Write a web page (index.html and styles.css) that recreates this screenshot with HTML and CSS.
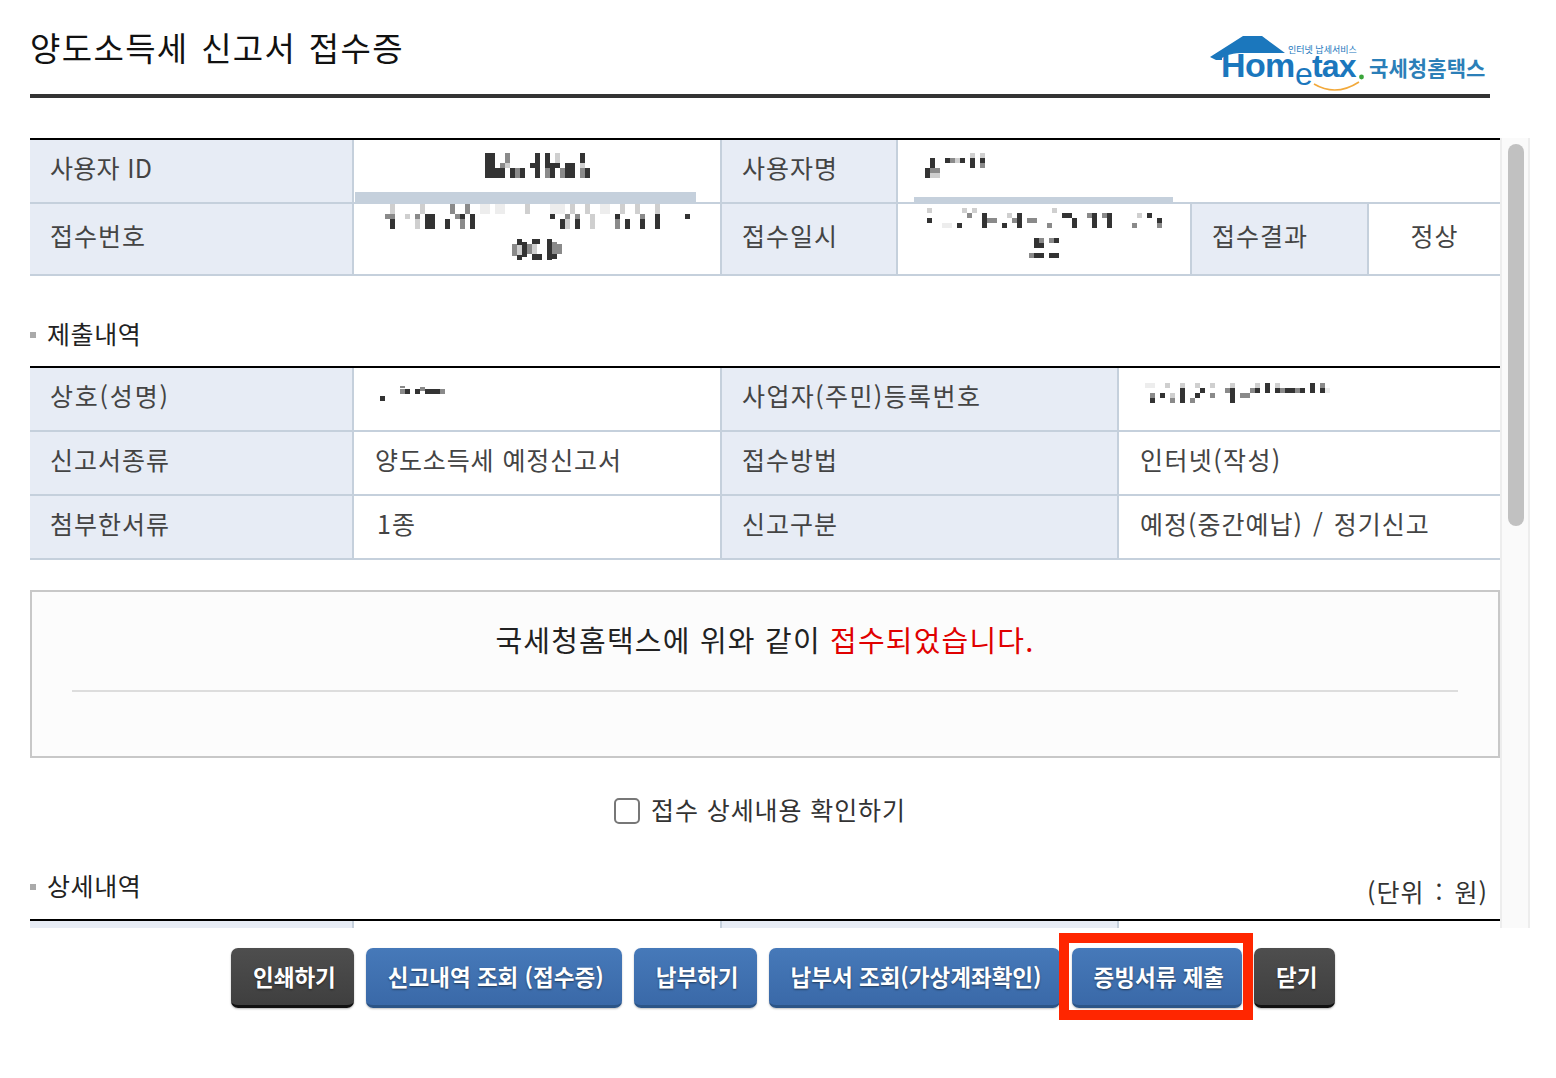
FILE: index.html
```html
<!DOCTYPE html>
<html lang="ko">
<head>
<meta charset="utf-8">
<title>양도소득세 신고서 접수증</title>
<link rel="stylesheet" href="styles.css">
</head>
<body>
<header class="header">
  <h1 class="title">양도소득세 신고서 접수증</h1>
  <svg class="logo" width="282" height="66" viewBox="0 0 282 66" role="img" aria-label="Hometax 국세청홈택스">
    <path class="logo-roof" d="M2 27 L35 6 H54 L77 23 H38 C24 23 18 25 14 28 V30 H8 Z"/>
    <text class="logo-small" x="80" y="23">인터넷 납세서비스</text>
    <text class="logo-hom" x="13" y="47">Hom</text>
    <text class="logo-e" x="87" y="55">e</text>
    <text class="logo-main" x="104" y="47">tax</text>
    <circle class="logo-dot" cx="153.5" cy="47" r="2.4"/>
    <path class="logo-smile" d="M106 54 Q128 67 151 52"/>
    <text class="logo-kr" x="161" y="46">국세청홈택스</text>
  </svg>
</header>

<div class="scroller">
  <main class="content">
    <table class="grid grid-six">
      <colgroup><col class="c-a"><col class="c-b"><col class="c-c"><col class="c-d"><col class="c-e"><col class="c-f"></colgroup>
      <tr class="r-short">
        <th class="id-label">사용자 ID</th>
        <td class="masked center-top">
          <svg class="mosaic" width="105" height="25" viewBox="0 0 21 5">
            <rect class="d" x="0" y="0" width="2" height="5"/><rect class="d" x="2" y="3" width="2" height="2"/><rect class="g" x="4" y="0" width="1" height="2"/><rect class="g" x="3" y="2" width="1" height="1"/><rect class="l" x="4" y="2" width="1" height="1"/><rect class="d" x="5" y="3" width="1" height="2"/><rect class="g" x="6" y="3" width="1" height="2"/><rect class="d" x="7" y="3" width="1" height="2"/><rect class="d" x="9" y="2" width="1" height="1"/><rect class="d" x="10" y="0" width="1" height="5"/><rect class="d" x="12" y="0" width="1" height="3"/><rect class="g" x="12" y="3" width="1" height="2"/><rect class="d" x="13" y="2" width="1" height="3"/><rect class="l" x="14" y="0" width="1" height="2"/><rect class="d" x="14" y="2" width="1" height="1"/><rect class="g" x="15" y="3" width="1" height="2"/><rect class="d" x="16" y="2" width="2" height="3"/><rect class="d" x="19" y="0" width="1" height="2"/><rect class="l" x="19" y="2" width="1" height="1"/><rect class="g" x="19" y="3" width="1" height="2"/><rect class="d" x="20" y="3" width="1" height="2"/>
          </svg>
          <span class="field-bar field-bar-id"></span>
        </td>
        <th>사용자명</th>
        <td class="masked name-cell" colspan="3">
          <svg class="mosaic" width="65" height="25" viewBox="0 0 13 5">
            <rect class="d" x="1" y="1" width="1" height="2"/><rect class="d" x="0" y="3" width="1" height="1"/><rect class="g" x="1" y="3" width="2" height="1"/><rect class="d" x="0" y="4" width="1" height="1"/><rect class="l" x="1" y="4" width="2" height="1"/><rect class="d" x="4" y="1" width="1" height="1"/><rect class="g" x="5" y="1" width="1" height="1"/><rect class="l" x="6" y="1" width="1" height="1"/><rect class="d" x="7" y="1" width="1" height="1"/><rect class="l" x="9" y="0" width="1" height="1"/><rect class="d" x="9" y="1" width="1" height="2"/><rect class="l" x="11" y="0" width="1" height="1"/><rect class="d" x="11" y="1" width="1" height="1"/><rect class="g" x="11" y="2" width="1" height="1"/>
          </svg>
          <span class="field-bar field-bar-name"></span>
        </td>
      </tr>
      <tr class="r-tall">
        <th>접수번호</th>
        <td class="masked stack">
          <svg class="mosaic" width="305" height="25" viewBox="0 0 61 5">
            <rect class="l" x="1" y="0" width="1" height="2"/><rect class="g" x="0" y="2" width="2" height="1"/><rect class="d" x="1" y="3" width="1" height="2"/><rect class="l" x="4" y="2" width="1" height="1"/><rect class="l" x="7" y="0" width="1" height="2"/><rect class="g" x="6" y="2" width="1" height="1"/><rect class="l" x="6" y="3" width="1" height="2"/><rect class="d" x="8" y="2" width="2" height="3"/><rect class="d" x="12" y="3" width="1" height="2"/><rect class="g" x="13" y="0" width="1" height="2"/><rect class="g" x="14" y="2" width="1" height="1"/><rect class="d" x="15" y="2" width="1" height="1"/><rect class="g" x="15" y="3" width="1" height="2"/><rect class="g" x="16" y="0" width="1" height="2"/><rect class="d" x="17" y="2" width="1" height="3"/><rect class="v" x="19" y="0" width="2" height="2"/><rect class="v" x="22" y="0" width="2" height="2"/><rect class="l" x="28" y="0" width="1" height="2"/><rect class="v" x="33" y="0" width="3" height="2"/><rect class="d" x="33" y="2" width="1" height="1"/><rect class="d" x="35" y="3" width="1" height="2"/><rect class="g" x="36" y="2" width="1" height="1"/><rect class="l" x="36" y="3" width="1" height="2"/><rect class="l" x="37" y="0" width="1" height="2"/><rect class="g" x="38" y="2" width="1" height="1"/><rect class="d" x="38" y="3" width="1" height="2"/><rect class="l" x="40" y="0" width="1" height="2"/><rect class="l" x="41" y="2" width="1" height="3"/><rect class="v" x="43" y="0" width="2" height="2"/><rect class="d" x="46" y="2" width="1" height="1"/><rect class="g" x="46" y="3" width="1" height="2"/><rect class="l" x="47" y="0" width="1" height="2"/><rect class="d" x="48" y="3" width="1" height="2"/><rect class="l" x="50" y="0" width="1" height="2"/><rect class="g" x="51" y="2" width="1" height="1"/><rect class="d" x="51" y="3" width="1" height="2"/><rect class="l" x="54" y="0" width="1" height="2"/><rect class="d" x="54" y="2" width="1" height="3"/><rect class="d" x="60" y="2" width="1" height="1"/>
          </svg>
          <svg class="mosaic mosaic-gap" width="50" height="22" viewBox="0 0 10 4.4">
            <rect class="g" x="0" y="1" width="1" height="2.4"/><rect class="d" x="1" y="0" width="1" height="1.2"/><rect class="l" x="1" y="1.2" width="1" height="2"/><rect class="d" x="2" y="0.6" width="1" height="3"/><rect class="d" x="1" y="3.2" width="1" height="1"/><rect class="g" x="3" y="1" width="1" height="2"/><rect class="d" x="4" y="0" width="1.5" height="1"/><rect class="l" x="4" y="1" width="1" height="2"/><rect class="d" x="4" y="3" width="2" height="1.2"/><rect class="d" x="7" y="0" width="1" height="4.2"/><rect class="g" x="8" y="0.6" width="1" height="2.4"/><rect class="d" x="8" y="3" width="1" height="1"/><rect class="g" x="9" y="1" width="1" height="2"/>
          </svg>
        </td>
        <th>접수일시</th>
        <td class="masked stack date-cell">
          <svg class="mosaic" width="235" height="20" viewBox="0 0 47 4">
            <rect class="l" x="0" y="0" width="1" height="1"/><rect class="d" x="0" y="2" width="1" height="1"/><rect class="v" x="3" y="3" width="2" height="1"/><rect class="l" x="7" y="0" width="1" height="1"/><rect class="g" x="8" y="1" width="1" height="1"/><rect class="d" x="6" y="3" width="1" height="1"/><rect class="l" x="9" y="0" width="1" height="1"/><rect class="d" x="11" y="1" width="1" height="3"/><rect class="g" x="12" y="2" width="2" height="1"/><rect class="l" x="16" y="1" width="1" height="1"/><rect class="d" x="15" y="3" width="1" height="1"/><rect class="g" x="17" y="2" width="1" height="1"/><rect class="d" x="18" y="1" width="1" height="3"/><rect class="g" x="20" y="2" width="2" height="1"/><rect class="l" x="25" y="0" width="1" height="1"/><rect class="g" x="24" y="3" width="1" height="1"/><rect class="d" x="27" y="1" width="2" height="1"/><rect class="d" x="29" y="2" width="1" height="2"/><rect class="d" x="33" y="1" width="1" height="3"/><rect class="g" x="32" y="1" width="1" height="1"/><rect class="d" x="36" y="1" width="1" height="3"/><rect class="g" x="35" y="1" width="1" height="1"/><rect class="l" x="42" y="1" width="1" height="1"/><rect class="g" x="41" y="3" width="1" height="1"/><rect class="d" x="44" y="1" width="1" height="1"/><rect class="d" x="46" y="2" width="1" height="1"/><rect class="g" x="46" y="3" width="1" height="1"/>
          </svg>
          <svg class="mosaic mosaic-gap" width="30" height="20" viewBox="0 0 6 4">
            <rect class="d" x="1" y="0" width="1" height="1"/><rect class="g" x="2" y="0" width="1" height="1"/><rect class="d" x="1" y="1" width="2" height="1"/><rect class="g" x="0" y="3" width="1" height="1"/><rect class="d" x="1" y="3" width="2" height="1"/><rect class="g" x="4" y="0" width="1" height="1"/><rect class="d" x="5" y="0" width="1" height="1"/><rect class="d" x="4" y="3" width="2" height="1"/>
          </svg>
        </td>
        <th>접수결과</th>
        <td class="centered">정상</td>
      </tr>
    </table>

    <div class="section-head">
      <h2 class="section-title">제출내역</h2>
    </div>
    <table class="grid grid-four">
      <colgroup><col class="c-a"><col class="c-b"><col class="c-g"><col class="c-h"></colgroup>
      <tr class="r-short">
        <th class="owner-label">상호(성명)</th>
        <td class="masked owner-cell">
          <svg class="mosaic" width="65" height="20" viewBox="0 0 13 4">
            <rect class="g" x="4" y="0" width="1" height="0.4"/><rect class="g" x="8" y="0.2" width="1" height="0.8"/><rect class="d" x="0" y="2" width="1" height="1"/><rect class="g" x="4" y="0.5" width="1" height="1"/><rect class="d" x="5" y="0.5" width="1" height="1"/><rect class="d" x="7" y="0.5" width="1" height="1"/><rect class="d" x="9" y="0.5" width="3" height="1"/><rect class="g" x="12" y="0.5" width="1" height="1"/>
          </svg>
        </td>
        <th class="reg-label">사업자(주민)등록번호</th>
        <td class="masked reg-cell">
          <svg class="mosaic" width="190" height="20" viewBox="0 0 38 4">
            <rect class="v" x="1" y="0" width="2" height="1"/><rect class="l" x="5" y="0" width="1" height="1"/><rect class="l" x="8" y="0" width="1" height="1"/><rect class="g" x="2" y="2" width="1" height="1"/><rect class="d" x="2" y="3" width="1" height="1"/><rect class="d" x="4" y="2" width="1" height="1"/><rect class="l" x="6" y="2" width="1" height="1"/><rect class="g" x="6" y="3" width="1" height="1"/><rect class="d" x="8" y="1" width="1" height="3"/><rect class="g" x="10" y="3" width="1" height="1"/><rect class="l" x="11" y="0" width="1" height="1"/><rect class="d" x="12" y="1" width="1" height="1"/><rect class="d" x="11" y="2" width="1" height="1"/><rect class="g" x="14" y="2" width="1" height="1"/><rect class="l" x="14" y="0" width="1" height="1"/><rect class="g" x="17" y="1" width="1" height="1"/><rect class="l" x="18" y="0" width="1" height="1"/><rect class="d" x="18" y="1" width="1" height="3"/><rect class="g" x="20" y="2" width="2" height="1"/><rect class="g" x="22" y="1" width="1" height="1"/><rect class="l" x="23" y="0" width="1" height="1"/><rect class="d" x="23" y="1" width="1" height="1"/><rect class="d" x="25" y="0" width="1" height="2"/><rect class="l" x="27" y="0" width="1" height="1"/><rect class="d" x="27" y="1" width="1" height="1"/><rect class="g" x="28" y="1" width="1" height="1"/><rect class="d" x="29" y="1" width="2" height="1"/><rect class="g" x="31" y="1" width="1" height="1"/><rect class="d" x="32" y="1" width="1" height="1"/><rect class="d" x="34" y="0" width="1" height="2"/><rect class="g" x="36" y="0" width="1" height="1"/><rect class="d" x="36" y="1" width="1" height="1"/><rect class="v" x="37" y="1" width="1" height="1"/>
          </svg>
        </td>
      </tr>
      <tr class="r-short">
        <th>신고서종류</th>
        <td class="type-value">양도소득세 예정신고서</td>
        <th>접수방법</th>
        <td class="paren-value">인터넷(작성)</td>
      </tr>
      <tr class="r-short">
        <th>첨부한서류</th>
        <td class="count-value">1종</td>
        <th>신고구분</th>
        <td class="split-value">예정(중간예납) / 정기신고</td>
      </tr>
    </table>

    <section class="notice">
      <p class="notice-text">국세청홈택스에 위와 같이 <span class="notice-red">접수되었습니다.</span></p>
      <hr class="notice-rule">
    </section>

    <label class="confirm"><input class="confirm-box" type="checkbox"><span>접수 상세내용 확인하기</span></label>

    <div class="section-head section-head-detail">
      <h2 class="section-title">상세내역</h2>
      <span class="unit">(단위 : 원)</span>
    </div>
    <table class="grid grid-four">
      <colgroup><col class="c-a"><col class="c-b"><col class="c-g"><col class="c-h"></colgroup>
      <tr class="r-short"><th></th><td></td><th></th><td></td></tr>
    </table>
  </main>
  <div class="scrollbar"><div class="thumb"></div></div>
</div>

<footer class="actions">
  <button class="btn btn-dark" type="button">인쇄하기</button>
  <button class="btn btn-blue" type="button">신고내역 조회 (접수증)</button>
  <button class="btn btn-blue" type="button">납부하기</button>
  <button class="btn btn-blue" type="button">납부서 조회(가상계좌확인)</button>
  <button class="btn btn-blue btn-marked" type="button">증빙서류 제출</button>
  <button class="btn btn-dark" type="button">닫기</button>
</footer>
</body>
</html>
```
FILE: styles.css
```css
* { box-sizing: border-box; }
html, body { margin: 0; height: 100%; }
body {
  background: #fff;
  color: #444;
  font-family: "Noto Sans CJK KR", "Noto Sans", sans-serif;
  overflow: hidden;
  padding-left: 30px;
}

.header {
  width: 1460px;
  height: 98px;
  border-bottom: 4px solid #333;
  display: flex;
  justify-content: space-between;
  align-items: flex-start;
  margin-bottom: 40px;
}
.title {
  margin: 23px 0 0;
  font-size: 33px;
  line-height: 48px;
  font-weight: 400;
  color: #111;
  letter-spacing: 1.35px;
  word-spacing: 2px;
}
.logo { margin-top: 30px; }
.logo-roof { fill: #1b77bd; }
.logo-small { font-size: 9px; fill: #1b77bd; }
.logo-main { font: 700 32px "Liberation Sans", sans-serif; fill: #1b77bd; letter-spacing: -0.8px; }
.logo-hom { font: 700 34px "Liberation Sans", sans-serif; fill: #1b77bd; letter-spacing: -0.6px; }
.logo-e { font: 400 32px "Liberation Sans", sans-serif; fill: #1b77bd; }
.logo-dot { fill: #3aa53a; }
.logo-smile { fill: none; stroke: #f2a93b; stroke-width: 1.6; }
.logo-kr { font-size: 21px; font-weight: 700; fill: #2b7fb8; letter-spacing: 0.1px; }

.scroller {
  display: flex;
  width: 1500px;
  height: 790px;
}
.content {
  width: 1470px;
  overflow: hidden;
}
.scrollbar {
  width: 30px;
  background: #fafafa;
  border-left: 2px solid #ededed;
  border-right: 2px solid #ededed;
  padding: 6px 0 0 6px;
}
.thumb {
  width: 16px;
  height: 382px;
  background: #c1c1c1;
  border-radius: 8px;
}

.grid {
  width: 1470px;
  table-layout: fixed;
  border-collapse: separate;
  border-spacing: 0;
  border-top: 2px solid #000;
  font-size: 25px;
  letter-spacing: 1px;
}
.c-a { width: 324px; }
.c-b { width: 368px; }
.c-c { width: 176px; }
.c-d { width: 294px; }
.c-e { width: 177px; }
.c-f { width: 131px; }
.c-g { width: 397px; }
.c-h { width: 381px; }
.r-short { height: 64px; }
.r-tall { height: 72px; }
.grid th, .grid td {
  border-bottom: 2px solid #c5d0dc;
  border-right: 2px solid #c5d0dc;
  padding: 0 0 8px 21px;
  font-weight: 400;
  text-align: left;
  color: #444;
  position: relative;
}
.grid tr > :last-child { border-right: 0; }
.grid th { background: #e7ecf5; padding-left: 20px; }
.grid th.id-label { letter-spacing: 0.3px; }
.grid th.reg-label { letter-spacing: 1.4px; }
.grid th.owner-label { letter-spacing: 1.8px; }
.grid td.type-value { letter-spacing: 0.9px; }
.grid td.paren-value { letter-spacing: 1.4px; }
.grid td.count-value { padding-left: 23px; }
.grid td.split-value { word-spacing: 2px; }
.grid td.centered { text-align: center; padding: 0 0 8px; }

.grid td.masked { vertical-align: top; }
.mosaic { display: block; shape-rendering: crispEdges; }
.mosaic .d { fill: #333; }
.mosaic .g { fill: #8a8a8a; }
.mosaic .l { fill: #cfcfcf; }
.mosaic .v { fill: #ededed; }

.grid td.center-top { padding: 13px 0 0; }
.center-top .mosaic { margin: 0 auto; }
.grid td.name-cell { padding: 13px 0 0 27px; }
.grid td.stack { padding: 0; }
.grid td.date-cell { padding-top: 4px; }
.stack .mosaic { margin-left: auto; margin-right: auto; }
.stack .mosaic-gap { margin-top: 10px; }
.grid td.owner-cell { padding: 18px 0 0 26px; }
.grid td.reg-cell { padding: 15px 0 0 21px; }

.field-bar { position: absolute; background: #c5d0dc; bottom: -2px; }
.field-bar-id { left: 1px; width: 341px; height: 12px; }
.field-bar-name { left: 16px; width: 259px; height: 7px; }

.section-head {
  height: 90px;
  display: flex;
  justify-content: space-between;
  align-items: flex-start;
  padding: 39px 12px 0 0;
}
.section-head-detail { height: 59px; padding-top: 7px; }
.section-title {
  margin: 0;
  padding-left: 17px;
  font-size: 25px;
  line-height: 36px;
  font-weight: 400;
  color: #222;
  position: relative;
  letter-spacing: 0.6px;
}
.section-title::before {
  content: "";
  position: absolute;
  left: 0;
  top: 17px;
  width: 6px;
  height: 6px;
  background: #aaa;
}
.unit {
  font-size: 25px;
  line-height: 36px;
  color: #333;
  margin-top: 6px;
  letter-spacing: 1px;
  word-spacing: 3px;
}

.notice {
  margin-top: 30px;
  height: 168px;
  border: 2px solid #c8c8c8;
  background: #fcfcfc;
  padding: 27px 40px 0;
}
.notice-text {
  margin: 0;
  height: 40px;
  font-size: 29px;
  line-height: 40px;
  letter-spacing: 1.2px;
  color: #222;
  text-align: center;
}
.notice-red { color: #e00000; }
.notice-rule {
  margin: 31px 0 0;
  border: 0;
  height: 2px;
  background: #ddd;
}

.confirm {
  height: 102px;
  display: flex;
  align-items: center;
  justify-content: center;
  gap: 11px;
  font-size: 25px;
  letter-spacing: 0.9px;
  color: #333;
  padding-right: 10px;
}
.confirm-box {
  appearance: none;
  margin: 4px 0 0;
  width: 26px;
  height: 26px;
  border: 2px solid #777;
  border-radius: 5px;
  background: #fff;
}

.actions {
  display: flex;
  justify-content: flex-start;
  gap: 12px;
  margin: 20px 0 0 201px;
}
.btn {
  height: 60px;
  padding: 0 18px 2px 22px;
  border: 0;
  border-radius: 7px;
  color: #fff;
  font: 700 22.5px "Noto Sans CJK KR", sans-serif;
  text-shadow: 0 1px 2px rgba(0,0,0,.5);
  white-space: nowrap;
}
.btn-dark {
  background: linear-gradient(#4e4e4e, #3f3f3f);
  border-bottom: 3px solid #111;
  box-shadow: 0 1px 2px rgba(0,0,0,.3);
}
.btn-blue {
  background: linear-gradient(#4679b9, #3a69a8);
  border-bottom: 3px solid #2c5587;
  box-shadow: 0 1px 2px rgba(0,0,0,.25);
}
.btn-marked { position: relative; }
.btn-marked::after {
  content: "";
  position: absolute;
  inset: -15px -11px -15px -13px;
  border: 10px solid #ff2600;
  pointer-events: none;
}
```
